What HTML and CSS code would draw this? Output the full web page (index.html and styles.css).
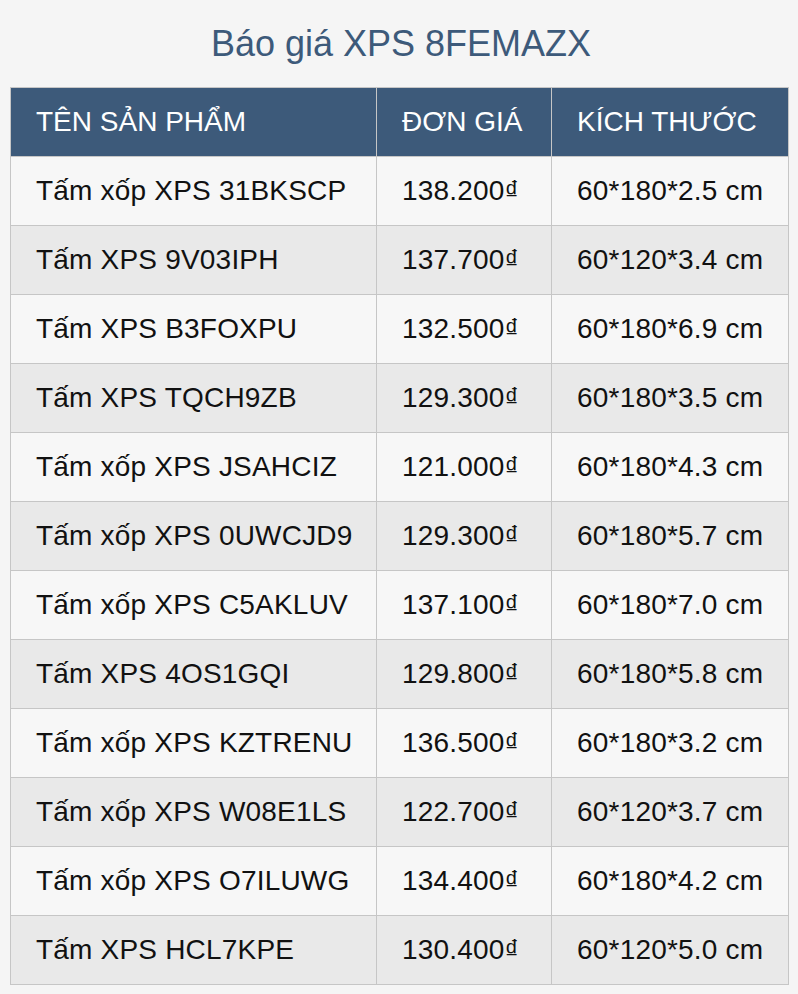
FILE: index.html
```html
<!DOCTYPE html>
<html lang="vi">
<head>
<meta charset="utf-8">
<title>Báo giá XPS 8FEMAZX</title>
<link rel="stylesheet" href="styles.css">
</head>
<body>
<div class="page">
  <h1 class="title">Báo giá XPS 8FEMAZX</h1>
  <table class="price-table">
    <colgroup>
      <col class="col-name">
      <col class="col-price">
      <col class="col-size">
    </colgroup>
    <thead>
      <tr><th>TÊN SẢN PHẨM</th><th>ĐƠN GIÁ</th><th>KÍCH THƯỚC</th></tr>
    </thead>
    <tbody>
      <tr><td>Tấm xốp XPS 31BKSCP</td><td>138.200₫</td><td>60*180*2.5 cm</td></tr>
      <tr><td>Tấm XPS 9V03IPH</td><td>137.700₫</td><td>60*120*3.4 cm</td></tr>
      <tr><td>Tấm XPS B3FOXPU</td><td>132.500₫</td><td>60*180*6.9 cm</td></tr>
      <tr><td>Tấm XPS TQCH9ZB</td><td>129.300₫</td><td>60*180*3.5 cm</td></tr>
      <tr><td>Tấm xốp XPS JSAHCIZ</td><td>121.000₫</td><td>60*180*4.3 cm</td></tr>
      <tr><td>Tấm xốp XPS 0UWCJD9</td><td>129.300₫</td><td>60*180*5.7 cm</td></tr>
      <tr><td>Tấm xốp XPS C5AKLUV</td><td>137.100₫</td><td>60*180*7.0 cm</td></tr>
      <tr><td>Tấm XPS 4OS1GQI</td><td>129.800₫</td><td>60*180*5.8 cm</td></tr>
      <tr><td>Tấm xốp XPS KZTRENU</td><td>136.500₫</td><td>60*180*3.2 cm</td></tr>
      <tr><td>Tấm xốp XPS W08E1LS</td><td>122.700₫</td><td>60*120*3.7 cm</td></tr>
      <tr><td>Tấm xốp XPS O7ILUWG</td><td>134.400₫</td><td>60*180*4.2 cm</td></tr>
      <tr><td>Tấm XPS HCL7KPE</td><td>130.400₫</td><td>60*120*5.0 cm</td></tr>
    </tbody>
  </table>
</div>
</body>
</html>
```
FILE: styles.css
```css
html, body {
  margin: 0;
  padding: 0;
  background: #f5f5f5;
}
body {
  font-family: "Liberation Sans", Arial, sans-serif;
  color: #111;
}
.page {
  padding: 0 10px;
}
.title {
  margin: 0;
  padding: 23px 0 23px 4px;
  font-size: 36px;
  font-weight: normal;
  line-height: 41px;
  text-align: center;
  color: #3d5a7a;
}
.price-table {
  width: 778px;
  border-collapse: collapse;
  table-layout: fixed;
  font-size: 28px;
  line-height: 32px;
  letter-spacing: 0.2px;
}
.col-name { width: 366px; }
.col-price { width: 175px; }
.col-size { width: 237px; }
.price-table th,
.price-table td {
  border: 1px solid #c6c6c6;
  padding: 18px 25px;
  text-align: left;
  white-space: nowrap;
}
.price-table th {
  background: #3d5a7a;
  color: #ffffff;
  font-weight: normal;
  letter-spacing: 0;
}
.price-table tbody tr:nth-child(odd) td {
  background: #f7f7f7;
}
.price-table tbody tr:nth-child(even) td {
  background: #e9e9e9;
}
```
